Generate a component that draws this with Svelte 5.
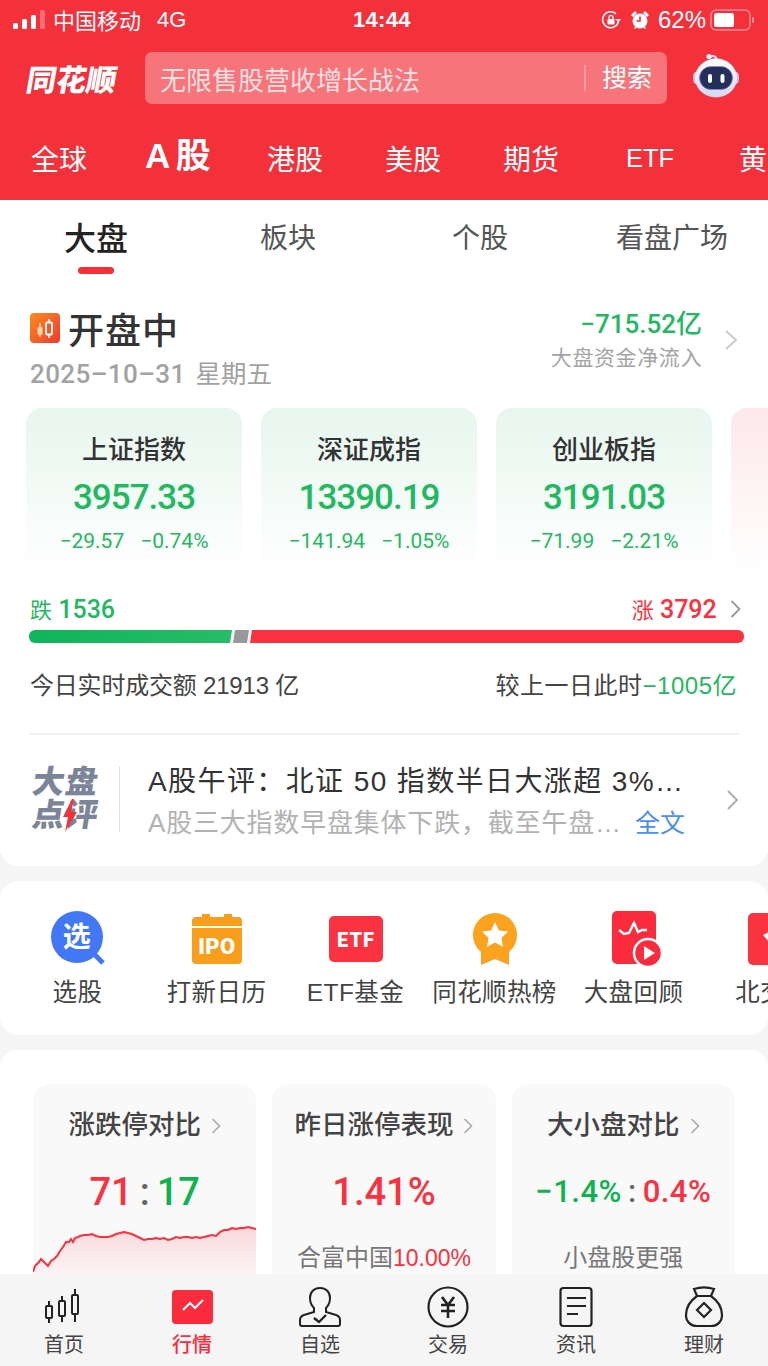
<script>
  const topTabs = ['全球', 'A 股', '港股', '美股', '期货', 'ETF', '黄金'];
  const subTabs = ['大盘', '板块', '个股', '看盘广场'];
  const indexes = [
    { name: '上证指数', value: '3957.33', diff: '−29.57', pct: '−0.74%' },
    { name: '深证成指', value: '13390.19', diff: '−141.94', pct: '−1.05%' },
    { name: '创业板指', value: '3191.03', diff: '−71.99', pct: '−2.21%' }
  ];
  const navs = [
    { label: '首页' },
    { label: '行情', on: true },
    { label: '自选' },
    { label: '交易' },
    { label: '资讯' },
    { label: '理财' }
  ];
  // 涨跌停对比 small line, points read off the screenshot
  const line = [[0,54],[2,48],[4,46],[6,44],[8,41],[10,43],[12,45],[15,48],[18,43],[21,41],[24,38],[27,33],[30,29],[33,24],[36,24],[38,21],[40,24],[42,20],[45,19],[47,18],[51,17],[55,17],[59,16],[63,18],[67,19],[71,19],[75,19],[79,18],[83,16],[87,15],[91,14],[95,15],[99,16],[103,18],[107,20],[111,22],[115,21],[119,21],[123,20],[127,21],[131,20],[135,22],[139,21],[143,19],[147,20],[151,19],[155,19],[159,20],[163,19],[167,20],[171,19],[175,18],[179,17],[183,18],[187,14],[191,12],[195,12],[199,10],[203,11],[207,10],[211,10],[215,9],[219,10],[223,11]];
  const linePts = line.map(p => p.join(',')).join(' ');
  const areaPts = '0,60 ' + linePts + ' 223,60';
</script>

<div class="page">
  <header class="head">
    <div class="status">
      <div class="st-left">
        <svg width="34" height="20" viewBox="0 0 34 20"><rect x="0" y="13" width="5" height="6" rx="1.5" fill="#fff"/><rect x="9" y="9" width="5" height="10" rx="1.5" fill="#fff"/><rect x="18" y="5" width="5" height="14" rx="1.5" fill="#fff"/><rect x="27" y="0" width="5" height="19" rx="1.5" fill="#fff" opacity=".3"/></svg>
        <span class="carrier">中国移动</span>
        <span class="net">4G</span>
      </div>
      <div class="clock">14:44</div>
      <div class="st-right">
        <svg width="20" height="20" viewBox="0 0 20 20" fill="none"><path d="M17.500 11A8 8 0 1 1 15 3.800" stroke="#fff" stroke-width="1.600"/><path d="M14 9l3.500 3L20 9" fill="#fff"/><rect x="6.500" y="9" width="7" height="5.500" rx="1" fill="#fff"/><path d="M8 9V7.500a2 2 0 0 1 4 0V9" stroke="#fff" stroke-width="1.300"/></svg>
        <svg width="20" height="20" viewBox="0 0 20 20"><circle cx="10" cy="11" r="7.500" fill="#fff"/><path d="M1 5l4-4 2 2-4 4zM19 5l-4-4-2 2 4 4zM4 18l2-2 1 1-2 2zM16 18l-2-2-1 1 2 2z" fill="#fff"/><path d="M10 6.500V11H6.500" stroke="#f4303b" stroke-width="1.600" fill="none"/></svg>
        <span class="pct">62%</span>
        <svg width="45" height="22" viewBox="0 0 45 22"><rect x="1" y="1" width="39" height="20" rx="5" fill="none" stroke="#fff" stroke-opacity=".45" stroke-width="1.500"/><rect x="4" y="4" width="20" height="14" rx="2.500" fill="#fff"/><rect x="42" y="8" width="2" height="6" rx="1" fill="#fff" opacity=".45"/></svg>
      </div>
    </div>

    <div class="searchrow">
      <div class="logo">同花顺</div>
      <div class="search">
        <span class="hint">无限售股营收增长战法</span>
        <span class="go">搜索</span>
      </div>
      <svg class="robot" width="46" height="46" viewBox="0 0 46 46">
        <defs>
          <linearGradient id="rb" x1="0" y1="0" x2="0" y2="1"><stop offset="0" stop-color="#fff"/><stop offset="1" stop-color="#d6d5f2"/></linearGradient>
        </defs>
        <path d="M17 4c3-2 6-1 7 3" fill="none" stroke="#e4e3f6" stroke-width="2"/>
        <circle cx="16" cy="3.500" r="2.600" fill="#ecebfa"/>
        <ellipse cx="2.500" cy="25" rx="2.500" ry="6" fill="#c9c8ec"/>
        <ellipse cx="43.500" cy="25" rx="2.500" ry="6" fill="#c9c8ec"/>
        <ellipse cx="23" cy="25" rx="21" ry="19.500" fill="url(#rb)"/>
        <rect x="6.500" y="13.500" width="33" height="23" rx="11.500" fill="#24305a" stroke="#8f7fe0" stroke-width=".6"/>
        <rect x="15" y="21" width="4" height="9" rx="2" fill="#fff"/>
        <rect x="27.500" y="21" width="4" height="9" rx="2" fill="#fff"/>
      </svg>
    </div>

    <nav class="toptabs">
      {#each topTabs as t, i}
        <span class="toptab" class:on={i === 1}>{t}</span>
      {/each}
    </nav>
  </header>

  <section class="panel market">
    <div class="subtabs">
      {#each subTabs as t, i}
        <div class="subtab" class:on={i === 0}>{t}</div>
      {/each}
    </div>

    <div class="summary">
      <div>
        <div class="stateline">
          <span class="state-ic">
            <svg width="30" height="30" viewBox="0 0 30 30">
              <defs><linearGradient id="si" x1="0" y1="0" x2="1" y2="1"><stop offset="0" stop-color="#fb8c1e"/><stop offset="1" stop-color="#ee3a2f"/></linearGradient></defs>
              <rect width="30" height="30" rx="4" fill="url(#si)"/>
              <path d="M10 10v14" stroke="#fdd2a8" stroke-width="1.600"/><rect x="7.500" y="14" width="5" height="8" rx="1" fill="#fdd2a8"/>
              <path d="M19 6v19" stroke="#fff" stroke-width="1.600"/><rect x="16" y="9.500" width="6" height="12" rx="1" fill="#ee5a2a" stroke="#fff" stroke-width="1.800"/>
            </svg>
          </span>
          <span class="state">开盘中</span>
        </div>
        <div class="date">2025–10–31<em>星期五</em></div>
      </div>
      <div class="flow">
        <div class="flow-txt">
          <div class="flow-num">−715.52亿</div>
          <div class="flow-lab">大盘资金净流入</div>
        </div>
        <svg class="chev" width="14" height="20" viewBox="0 0 14 20"><path d="M2 1l10 9-10 9" fill="none" stroke="#ccc" stroke-width="2"/></svg>
      </div>
    </div>

    <div class="cards">
      {#each indexes as c}
        <div class="card">
          <div class="c-name">{c.name}</div>
          <div class="c-val">{c.value}</div>
          <div class="c-sub"><span>{c.diff}</span><span>{c.pct}</span></div>
        </div>
      {/each}
      <div class="card red"></div>
    </div>

    <div class="counts">
      <span class="green"><i>跌</i> 1536</span>
      <span class="redtxt"><i>涨</i> 3792
        <svg width="11" height="18" viewBox="0 0 11 18"><path d="M1.500 1l8 8-8 8" fill="none" stroke="#999" stroke-width="1.800"/></svg>
      </span>
    </div>
    <div class="bar">
      <div class="b-down"></div>
      <div class="b-flat"></div>
      <div class="b-up"></div>
    </div>

    <div class="volume">
      <span class="vol-l">今日实时成交额 21913 亿</span>
      <span class="vol-r">较上一日此时<b>−1005亿</b></span>
    </div>

    <div class="news">
      <div class="news-logo">
        <span>大盘</span>
        <span class="l2">点<i>评</i></span>
        <svg class="bolt" width="14" height="33" viewBox="0 0 14 33"><path d="M9 0L0 18h5l-3 15L14 13H8l3-13z" fill="#f4303b"/></svg>
      </div>
      <div class="news-body">
        <div class="news-title">A股午评：北证 50 指数半日大涨超 3%…</div>
        <div class="news-sub"><span>A股三大指数早盘集体下跌，截至午盘…</span><a href="#top">全文</a></div>
      </div>
      <svg class="chev2" width="13" height="20" viewBox="0 0 13 20"><path d="M2 1l9 9-9 9" fill="none" stroke="#aaa" stroke-width="1.800"/></svg>
    </div>
  </section>

  <section class="panel quick">
    <div class="q-item">
      <svg class="ic-pick" width="56" height="56" viewBox="0 0 56 56"><circle cx="26" cy="26" r="26" fill="#4277f6"/><path d="M43 43l9 9" stroke="#4277f6" stroke-width="5"/><text x="26" y="36" text-anchor="middle" font-size="28" font-weight="700" fill="#fff" font-family="Noto Sans CJK SC">选</text></svg>
      <span>选股</span>
    </div>
    <div class="q-item">
      <svg width="50" height="50" viewBox="0 0 50 50"><path d="M10 0h8v3h14V0h8v3h6a4 4 0 0 1 4 4v5H0V7a4 4 0 0 1 4-4h6z" fill="#f99d1c"/><path d="M0 14h50v32a4 4 0 0 1-4 4H4a4 4 0 0 1-4-4z" fill="#f99d1c"/><text x="25" y="40" text-anchor="middle" font-size="22" font-weight="900" fill="#fff" font-family="Roboto">IPO</text></svg>
      <span>打新日历</span>
    </div>
    <div class="q-item">
      <svg width="54" height="46" viewBox="0 0 54 46"><rect width="54" height="46" rx="5" fill="#fb3340"/><text x="27" y="31" text-anchor="middle" font-size="20" font-weight="900" letter-spacing="1" fill="#fff" font-family="Roboto">ETF</text></svg>
      <span>ETF基金</span>
    </div>
    <div class="q-item">
      <svg width="44" height="52" viewBox="0 0 44 52"><path d="M8 34v18l14-6 14 6V34z" fill="#fba31e"/><circle cx="22" cy="22" r="22" fill="#fba31e"/><path d="M22 9l4 8.500 9 1-6.500 6.500 1.500 9-8-4.500-8 4.500 1.500-9L9 18.500l9-1z" fill="#fff"/></svg>
      <span>同花顺热榜</span>
    </div>
    <div class="q-item">
      <svg class="ic-review" width="50" height="56" viewBox="0 0 50 56"><rect width="44" height="53" rx="5" fill="#fb2a3c"/><path d="M7 19l5 4 5-1 5-10 4 9 4-2h5" fill="none" stroke="#fff" stroke-width="2.500"/><circle cx="36" cy="42" r="14" fill="#fb2a3c" stroke="#fff" stroke-width="2.500"/><path d="M32 35l11 7-11 7z" fill="#fff"/></svg>
      <span>大盘回顾</span>
    </div>
    <div class="q-item">
      <svg width="50" height="52" viewBox="0 0 50 52"><rect width="50" height="52" rx="5" fill="#fb3340"/><path d="M15 22l12-6 12 6-12 14z" fill="#fff"/></svg>
      <span>北交所</span>
    </div>
  </section>

  <section class="panel stats">
    <div class="stat">
      <div class="s-title">涨跌停对比<svg width="10" height="16" viewBox="0 0 10 16"><path d="M1.500 1l7 7-7 7" fill="none" stroke="#aaa" stroke-width="1.600"/></svg></div>
      <div class="s-big"><b class="up">71</b><i>:</i><b class="down">17</b></div>
      <svg class="s-chart" width="223" height="60" viewBox="0 0 223 60">
        <defs><linearGradient id="ar" x1="0" y1="0" x2="0" y2="1"><stop offset="0" stop-color="#f9d9dc"/><stop offset="1" stop-color="#faf5f5"/></linearGradient></defs>
        <polygon points={areaPts} fill="url(#ar)"/>
        <polyline points={linePts} fill="none" stroke="#fb2f3e" stroke-width="2"/>
      </svg>
    </div>
    <div class="stat">
      <div class="s-title">昨日涨停表现<svg width="10" height="16" viewBox="0 0 10 16"><path d="M1.500 1l7 7-7 7" fill="none" stroke="#aaa" stroke-width="1.600"/></svg></div>
      <div class="s-big"><b class="up">1.41%</b></div>
      <div class="s-foot">合富中国<span class="up">10.00%</span></div>
    </div>
    <div class="stat">
      <div class="s-title">大小盘对比<svg width="10" height="16" viewBox="0 0 10 16"><path d="M1.500 1l7 7-7 7" fill="none" stroke="#aaa" stroke-width="1.600"/></svg></div>
      <div class="s-big mid"><b class="down">−1.4%</b><i>:</i><b class="up">0.4%</b></div>
      <div class="s-foot">小盘股更强</div>
    </div>
  </section>

  <footer class="tabbar">
    {#each navs as n, i}
      <div class="nav" class:on={n.on}>
        <div class="nav-ic">
          {#if i === 0}
            <svg width="40" height="36" viewBox="0 0 40 36" fill="none" stroke="#222" stroke-width="2"><rect x="2" y="17" width="6" height="12" rx="1"/><path d="M5 12v5M5 29v5"/><rect x="15" y="12" width="6" height="15" rx="1"/><path d="M18 7v5M18 27v6"/><rect x="28" y="6" width="6" height="19" rx="1"/><path d="M31 0v6M31 25v8"/></svg>
          {:else if i === 1}
            <svg width="41" height="34" viewBox="0 0 41 34"><rect width="41" height="34" rx="4" fill="#fb2a3c"/><path d="M11 20l7-7 5 5 8-8" fill="none" stroke="#fff" stroke-width="2.200"/></svg>
          {:else if i === 2}
            <svg width="42" height="40" viewBox="0 0 42 40" fill="none" stroke="#222" stroke-width="2"><path d="M15 21c-3-3-4-7-4-10 0-6 4-10 10-10s10 4 10 10c0 3-1 7-4 10v4l10 3c3 1 4 3 4 5v4c0 1-1 2-2 2H3c-1 0-2-1-2-2v-4c0-2 1-4 4-5l10-3z"/><path d="M15 31l5 4 7-7" stroke-width="2.400"/></svg>
          {:else if i === 3}
            <svg width="42" height="42" viewBox="0 0 42 42" fill="none" stroke="#222" stroke-width="2.200"><circle cx="21" cy="21" r="19.500"/><path d="M15 11l6 8 6-8M14 19h14M14 25h14M21 19v13" stroke-width="2.600"/></svg>
          {:else if i === 4}
            <svg width="34" height="42" viewBox="0 0 34 42" fill="none" stroke="#222" stroke-width="2.200"><rect x="1.500" y="2" width="31" height="38" rx="3"/><path d="M8 12h19M8 20h19M8 28h11"/></svg>
          {:else}
            <svg width="40" height="42" viewBox="0 0 40 42" fill="none" stroke="#222" stroke-width="2.200"><path d="M10 3c6-2 14-2 20 0l-3 7H13z"/><path d="M13 10C6 15 2 22 2 29c0 7 5 11 11 11h14c6 0 11-4 11-11 0-7-4-14-11-19"/><path d="M20 17l7 7-7 7-7-7z"/></svg>
          {/if}
        </div>
        <span>{n.label}</span>
      </div>
    {/each}
  </footer>
</div>

<style>
  :global(body) {
    margin: 0;
    background: #f5f5f5;
  }
  .page {
    position: relative;
    width: 768px;
    height: 1366px;
    overflow: hidden;
    font-family: "Liberation Sans", "Noto Sans CJK SC", sans-serif;
    color: #333;
  }

  .head {
    height: 200px;
    background: #f4303b;
    color: #fff;
  }
  .status {
    height: 40px;
    display: flex;
    align-items: center;
    justify-content: space-between;
    padding: 0 13px 0 13px;
    font-size: 22px;
    position: relative;
  }
  .st-left, .st-right {
    display: flex;
    align-items: center;
  }
  .st-left { gap: 6px; }
  .carrier { margin-top: -3px; }
  .net { margin-left: 10px; }
  .clock {
    position: absolute;
    left: 353px;
    font-weight: 700;
    font-size: 22px;
    letter-spacing: .3px;
  }
  .st-right { gap: 9px; }
  .pct { font-size: 24px; margin-left: -1px; margin-right: -5px; }

  .searchrow {
    height: 52px;
    margin-top: 12px;
    display: flex;
    align-items: center;
    padding-left: 27px;
  }
  .logo {
    width: 118px;
    font-size: 30px;
    font-weight: 900;
    transform: skewX(-10deg);
    transform-origin: left center;
  }
  .search {
    width: 522px;
    height: 52px;
    box-sizing: border-box;
    background: #f8747b;
    border-radius: 7px;
    display: flex;
    align-items: center;
    justify-content: space-between;
    padding: 0 15px;
    font-size: 26px;
  }
  .hint { color: #fde0e2; }
  .go {
    font-size: 25px;
    border-left: 2px solid #fa9fa4;
    padding-left: 16px;
    line-height: 26px;
    color: #fff;
  }
  .robot { margin-left: 26px; margin-top: -4px; }

  .toptabs {
    height: 96px;
    box-sizing: border-box;
    padding: 12px 0 0 31px;
    display: flex;
    align-items: center;
    white-space: nowrap;
    font-size: 28px;
  }
  .toptab { width: 118px; flex: none; }
  .toptab:first-child { width: 114px; }
  .toptab.on {
    width: 122px;
    font-size: 35px;
    font-weight: 700;
    margin-top: -11px;
    word-spacing: -3px;
  }
  .toptab:nth-child(6) {
    font-size: 25.500px;
    margin-left: 5px;
    width: 113px;
  }

  .panel {
    background: #fff;
    border-radius: 18px;
    margin-bottom: 15px;
  }
  .market {
    height: 666px;
    border-radius: 0 0 18px 18px;
  }

  .subtabs {
    height: 74px;
    display: flex;
  }
  .subtab {
    width: 192px;
    text-align: center;
    font-size: 28px;
    line-height: 78px;
    color: #555;
    position: relative;
  }
  .subtab.on {
    font-size: 32px;
    font-weight: 500;
    color: #222;
  }
  .subtab.on::after {
    content: "";
    position: absolute;
    left: 78px;
    top: 67px;
    width: 36px;
    height: 7px;
    border-radius: 4px;
    background: #f4303b;
  }

  .summary {
    display: flex;
    justify-content: space-between;
    padding: 29px 30px 0;
    height: 105px;
    box-sizing: border-box;
    margin-bottom: 29px;
  }
  .stateline {
    display: flex;
    align-items: center;
    gap: 8px;
    height: 50px;
  }
  .state-ic { display: flex; }
  .state {
    font-size: 36px;
    font-weight: 500;
    color: #333;
    letter-spacing: 1px;
  }
  .date {
    font-family: Roboto, "Noto Sans CJK SC", sans-serif;
    font-size: 26px;
    font-weight: 500;
    color: #a2a2a2;
    letter-spacing: .4px;
    line-height: 42px;
  }
  .date em {
    font-style: normal;
    font-weight: 400;
    font-size: 25.500px;
    margin-left: 10px;
    letter-spacing: 0;
  }
  .flow {
    display: flex;
    align-items: center;
    gap: 22px;
    height: 74px;
  }
  .flow-txt { text-align: right; }
  .flow-num {
    font-family: Roboto, "Noto Sans CJK SC", sans-serif;
    font-size: 26px;
    font-weight: 500;
    color: #1fb95f;
    line-height: 36px;
  }
  .flow-lab {
    font-size: 21px;
    color: #a4a4a4;
    letter-spacing: .6px;
    line-height: 32px;
  }

  .cards {
    display: flex;
    gap: 19px;
    padding-left: 26px;
    height: 165px;
  }
  .card {
    flex: none;
    width: 216px;
    height: 165px;
    border-radius: 16px;
    text-align: center;
    background: linear-gradient(#e7f6ee, #ffffff);
    font-family: Roboto, "Noto Sans CJK SC", sans-serif;
  }
  .card.red { background: linear-gradient(#fde8ea, #ffffff); }
  .c-name {
    font-size: 26px;
    font-weight: 500;
    line-height: 38px;
    margin-top: 23px;
    color: #333;
  }
  .c-val {
    font-size: 35px;
    font-weight: 500;
    color: #1fb95f;
    line-height: 48px;
    margin-top: 5px;
    letter-spacing: -1px;
  }
  .c-sub {
    font-size: 21px;
    color: #1fb95f;
    line-height: 32px;
    margin-top: 3px;
    display: flex;
    justify-content: center;
    gap: 16px;
  }

  .counts {
    display: flex;
    justify-content: space-between;
    padding: 19px 27px 0 30px;
    font-family: Roboto, "Noto Sans CJK SC", sans-serif;
    font-size: 25px;
    font-weight: 500;
    line-height: 36px;
  }
  .counts i {
    font-style: normal;
    font-weight: 400;
    font-size: 22px;
  }
  .green { color: #1fb95f; }
  .redtxt { color: #fb3040; }
  .redtxt svg { margin-left: 7px; }
  .bar {
    display: flex;
    margin: 1px 24px 0 29px;
    height: 13px;
    gap: 1px;
  }
  .b-down {
    width: 203px;
    background: linear-gradient(90deg, #0fb55a, #27bc66);
    border-radius: 6px 0 0 6px;
    clip-path: polygon(0 0, 100% 0, calc(100% - 2px) 100%, 0 100%);
  }
  .b-flat {
    width: 16px;
    background: #999;
    clip-path: polygon(2px 0, 100% 0, calc(100% - 2px) 100%, 0 100%);
  }
  .b-up {
    flex: 1;
    background: #fb3040;
    border-radius: 0 6px 6px 0;
    clip-path: polygon(2px 0, 100% 0, 100% 100%, 0 100%);
  }

  .volume {
    display: flex;
    justify-content: space-between;
    padding: 25px 31px 0 30px;
    font-size: 24px;
    line-height: 36px;
    color: #444;
  }
  .vol-l { letter-spacing: -.2px; }
  .vol-r { letter-spacing: .5px; }
  .volume b {
    font-weight: 400;
    color: #1fb95f;
  }

  .news {
    margin: 29px 29px 0 30px;
    border-top: 2px solid #f0f0f0;
    display: flex;
    align-items: center;
    height: 130px;
    position: relative;
  }
  .news-logo {
    width: 89px;
    height: 66px;
    flex: none;
    border-right: 1.500px solid #e2e2e2;
    color: #7b8499;
    font-size: 32px;
    font-weight: 900;
    letter-spacing: 1px;
    line-height: 33px;
    display: flex;
    flex-direction: column;
    margin-top: -2px;
    position: relative;
  }
  .news-logo span { transform: skewX(-9deg); transform-origin: left bottom; }
  .l2 i { font-style: normal; }
  .bolt { position: absolute; left: 33px; top: 33px; }
  .news-body {
    margin-left: 28px;
    width: 540px;
    padding-top: 4px;
  }
  .news-title {
    font-size: 28px;
    letter-spacing: 1.400px;
    color: #333;
    line-height: 40px;
    white-space: nowrap;
  }
  .news-sub {
    font-size: 26px;
    color: #b2b2b2;
    line-height: 40px;
    margin-top: 1px;
    display: flex;
    justify-content: space-between;
    width: 537px;
    white-space: nowrap;
  }
  .news-sub span { letter-spacing: .8px; }
  .news-sub a {
    color: #4c8ef0;
    text-decoration: none;
    font-size: 25px;
  }
  .chev2 { margin-left: auto; }

  .quick {
    height: 154px;
    display: flex;
    white-space: nowrap;
    padding-left: 8px;
    overflow: hidden;
  }
  .q-item {
    flex: none;
    width: 139px;
    display: flex;
    flex-direction: column;
    align-items: center;
    font-size: 24.500px;
    letter-spacing: .4px;
    color: #444;
  }
  .q-item svg {
    margin-top: 30px;
    height: 56px;
    flex: none;
  }
  .q-item .ic-pick { margin-left: 2px; }
  .q-item .ic-review { margin-left: 6px; }
  .q-item span {
    margin-top: 6px;
    line-height: 40px;
  }

  .stats {
    height: 320px;
    display: flex;
    gap: 16px;
    padding: 34px 33px 0;
    box-sizing: border-box;
  }
  .stat {
    flex: 1;
    height: 270px;
    background: #f9f9f9;
    border-radius: 16px;
    text-align: center;
    position: relative;
    overflow: hidden;
  }
  .s-title {
    font-size: 26.500px;
    font-weight: 500;
    color: #444;
    margin-top: 23px;
    line-height: 36px;
    white-space: nowrap;
  }
  .s-title svg { margin-left: 10px; }
  .s-big {
    font-family: Roboto, "Noto Sans CJK SC", sans-serif;
    font-size: 38px;
    font-weight: 500;
    line-height: 50px;
    margin-top: 24px;
    color: #666;
  }
  .s-big b { font-weight: 500; }
  .s-big i { font-style: normal; margin: 0 7px; }
  .s-big.mid { font-size: 31px; letter-spacing: .5px; }
  .s-big.mid i { margin: 0 6px; }
  .up { color: #fb3040; }
  .down { color: #0cb34f; }
  .s-foot {
    margin-top: 23px;
    font-size: 24px;
    line-height: 36px;
    color: #777;
    white-space: nowrap;
  }
  .s-foot .up { font-size: 23px; }
  .s-chart {
    position: absolute;
    left: 0;
    top: 134px;
  }

  .tabbar {
    position: absolute;
    left: 0;
    right: 0;
    bottom: 0;
    height: 92px;
    background: #f5f5f5;
    display: flex;
  }
  .nav {
    flex: none;
    width: 128px;
    display: flex;
    flex-direction: column;
    align-items: center;
    font-size: 20px;
    color: #444;
  }
  .nav.on { color: #fb2a3c; font-weight: 500; }
  .nav-ic {
    height: 46px;
    margin-top: 10px;
    display: flex;
    align-items: center;
  }
  .nav span { line-height: 28px; margin-top: 1px; }
</style>
